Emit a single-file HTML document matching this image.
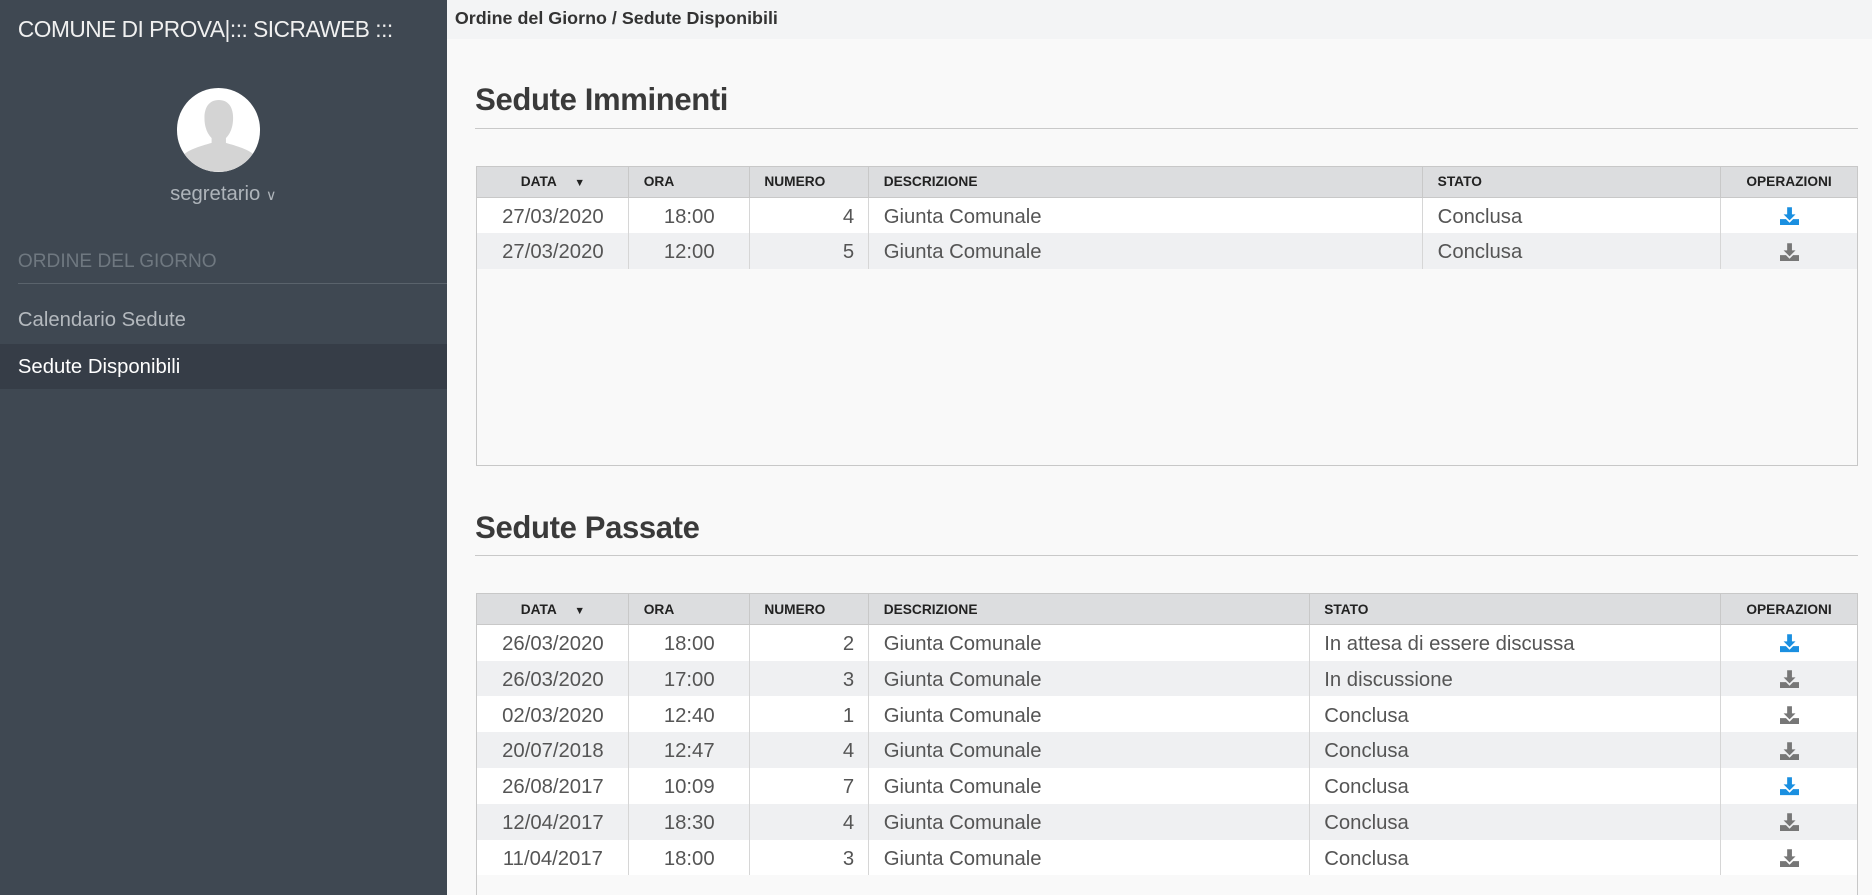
<!DOCTYPE html>
<html><head><meta charset="utf-8"><style>
html,body{margin:0;padding:0;width:1872px;height:895px;overflow:hidden;background:#f9f9f9;font-family:"Liberation Sans",sans-serif}
#w{zoom:1.19388;width:1568px;height:750px;position:relative}
.sb{position:absolute;left:0;top:0;width:374px;height:750px;background:#3f4852}
.t{position:absolute;left:15px;top:13px;color:#f0f0f0;font-size:19px;white-space:nowrap;letter-spacing:-0.4px}
.av{position:absolute;left:148px;top:74px;width:70px;height:70px;border-radius:50%;background:#fff;overflow:hidden}
.usr{position:absolute;left:0;width:374px;top:153px;text-align:center;color:#aeb4ba;font-size:17px}
.sec{position:absolute;left:15px;top:210px;color:#6f7880;font-size:16px}
.ln{position:absolute;left:15px;right:0;top:237px;border-top:1px solid #5a636c}
.it{position:absolute;left:0;width:374px;height:38px;line-height:40px;padding-left:15px;box-sizing:border-box;font-size:17px}
.hd{position:absolute;left:374px;top:0;right:0;height:33px;background:#f3f4f5;color:#333;font-weight:bold;font-size:15px;line-height:31px;padding-left:7px}
h2{position:absolute;left:398px;margin:0;font-size:26px;font-weight:bold;color:#3a3a3a;letter-spacing:-0.3px}
.hr{position:absolute;left:398px;width:1158px;border-top:1px solid #c9c9c9}
.box{position:absolute;left:399px;width:1156px;border:1px solid #c8c8c8;background:#f9f9f9}
table{border-collapse:collapse;width:100%;table-layout:fixed}
th{background:#dcdddf;height:25px;font-size:11.5px;font-weight:bold;color:#222;text-align:left;padding:0 0 0 12px;border-right:1px solid #c8c8c8;border-bottom:1px solid #c8c8c8}
th:last-child{border-right:none;text-align:center;padding:0}
td{height:30px;padding:3px 12px 0;box-sizing:border-box;font-size:17px;color:#555;border-right:1px solid #d6d6d6;white-space:nowrap}
td:last-child{border-right:none;text-align:center;padding:0}
tr:nth-child(odd) td{background:#eff0f2}
tr:nth-child(even) td{background:#fff}
.c{text-align:center}.r{text-align:right}
.ar{font-size:9px;margin-left:12px}
svg{vertical-align:middle}
</style></head><body><div id="w">
<div class="sb">
<div class="t">COMUNE DI PROVA|::: SICRAWEB :::</div>
<div class="av"><svg width="70" height="70" viewBox="0 0 70 70"><path d="M35 10c8 0 12 6 12 15 0 7-2 13-6 17v4c10 3 22 6 26 13v11H3V59c4-7 16-10 26-13v-4c-4-4-6-10-6-17 0-9 4-15 12-15z" fill="#d4d4d4"/></svg></div>
<div class="usr">segretario <span style="font-size:12px">&#8744;</span></div>
<div class="sec">ORDINE DEL GIORNO</div>
<div class="ln"></div>
<div class="it" style="top:249px;color:#b4b9be">Calendario Sedute</div>
<div class="it" style="top:288px;background:#363d47;color:#fff">Sedute Disponibili</div>
</div>
<div class="hd">Ordine del Giorno / Sedute Disponibili</div>
<h2 style="top:69px">Sedute Imminenti</h2>
<div class="hr" style="top:107px"></div>
<div class="box" style="top:139px;height:250px">
<table>
<colgroup><col style="width:127px"><col style="width:101px"><col style="width:100px"><col style="width:464px"><col style="width:249px"><col></colgroup>
<tr><th style="text-align:center;padding:0">DATA <span class="ar">&#9660;</span></th><th>ORA</th><th>NUMERO</th><th>DESCRIZIONE</th><th>STATO</th><th>OPERAZIONI</th></tr>
<tr><td class="c">27/03/2020</td><td class="c">18:00</td><td class="r">4</td><td>Giunta Comunale</td><td>Conclusa</td><td><svg width="16" height="16"><path d="M6 1h4v6h3l-5 5-5-5h3z" fill="#1a8fe0"/><path d="M0 11h5l3 3 3-3h5v5H0z" fill="#1a8fe0"/></svg></td></tr>
<tr><td class="c">27/03/2020</td><td class="c">12:00</td><td class="r">5</td><td>Giunta Comunale</td><td>Conclusa</td><td><svg width="16" height="16"><path d="M6 1h4v6h3l-5 5-5-5h3z" fill="#777"/><path d="M0 11h5l3 3 3-3h5v5H0z" fill="#777"/></svg></td></tr>
</table></div>
<h2 style="top:427px">Sedute Passate</h2>
<div class="hr" style="top:465px"></div>
<div class="box" style="top:497px;height:270px">
<table>
<colgroup><col style="width:127px"><col style="width:101px"><col style="width:100px"><col style="width:369px"><col style="width:344px"><col></colgroup>
<tr><th style="text-align:center;padding:0">DATA <span class="ar">&#9660;</span></th><th>ORA</th><th>NUMERO</th><th>DESCRIZIONE</th><th>STATO</th><th>OPERAZIONI</th></tr>
<tr><td class="c">26/03/2020</td><td class="c">18:00</td><td class="r">2</td><td>Giunta Comunale</td><td>In attesa di essere discussa</td><td><svg width="16" height="16"><path d="M6 1h4v6h3l-5 5-5-5h3z" fill="#1a8fe0"/><path d="M0 11h5l3 3 3-3h5v5H0z" fill="#1a8fe0"/></svg></td></tr>
<tr><td class="c">26/03/2020</td><td class="c">17:00</td><td class="r">3</td><td>Giunta Comunale</td><td>In discussione</td><td><svg width="16" height="16"><path d="M6 1h4v6h3l-5 5-5-5h3z" fill="#777"/><path d="M0 11h5l3 3 3-3h5v5H0z" fill="#777"/></svg></td></tr>
<tr><td class="c">02/03/2020</td><td class="c">12:40</td><td class="r">1</td><td>Giunta Comunale</td><td>Conclusa</td><td><svg width="16" height="16"><path d="M6 1h4v6h3l-5 5-5-5h3z" fill="#777"/><path d="M0 11h5l3 3 3-3h5v5H0z" fill="#777"/></svg></td></tr>
<tr><td class="c">20/07/2018</td><td class="c">12:47</td><td class="r">4</td><td>Giunta Comunale</td><td>Conclusa</td><td><svg width="16" height="16"><path d="M6 1h4v6h3l-5 5-5-5h3z" fill="#777"/><path d="M0 11h5l3 3 3-3h5v5H0z" fill="#777"/></svg></td></tr>
<tr><td class="c">26/08/2017</td><td class="c">10:09</td><td class="r">7</td><td>Giunta Comunale</td><td>Conclusa</td><td><svg width="16" height="16"><path d="M6 1h4v6h3l-5 5-5-5h3z" fill="#1a8fe0"/><path d="M0 11h5l3 3 3-3h5v5H0z" fill="#1a8fe0"/></svg></td></tr>
<tr><td class="c">12/04/2017</td><td class="c">18:30</td><td class="r">4</td><td>Giunta Comunale</td><td>Conclusa</td><td><svg width="16" height="16"><path d="M6 1h4v6h3l-5 5-5-5h3z" fill="#777"/><path d="M0 11h5l3 3 3-3h5v5H0z" fill="#777"/></svg></td></tr>
<tr><td class="c">11/04/2017</td><td class="c">18:00</td><td class="r">3</td><td>Giunta Comunale</td><td>Conclusa</td><td><svg width="16" height="16"><path d="M6 1h4v6h3l-5 5-5-5h3z" fill="#777"/><path d="M0 11h5l3 3 3-3h5v5H0z" fill="#777"/></svg></td></tr>
</table></div>
</div></body></html>
